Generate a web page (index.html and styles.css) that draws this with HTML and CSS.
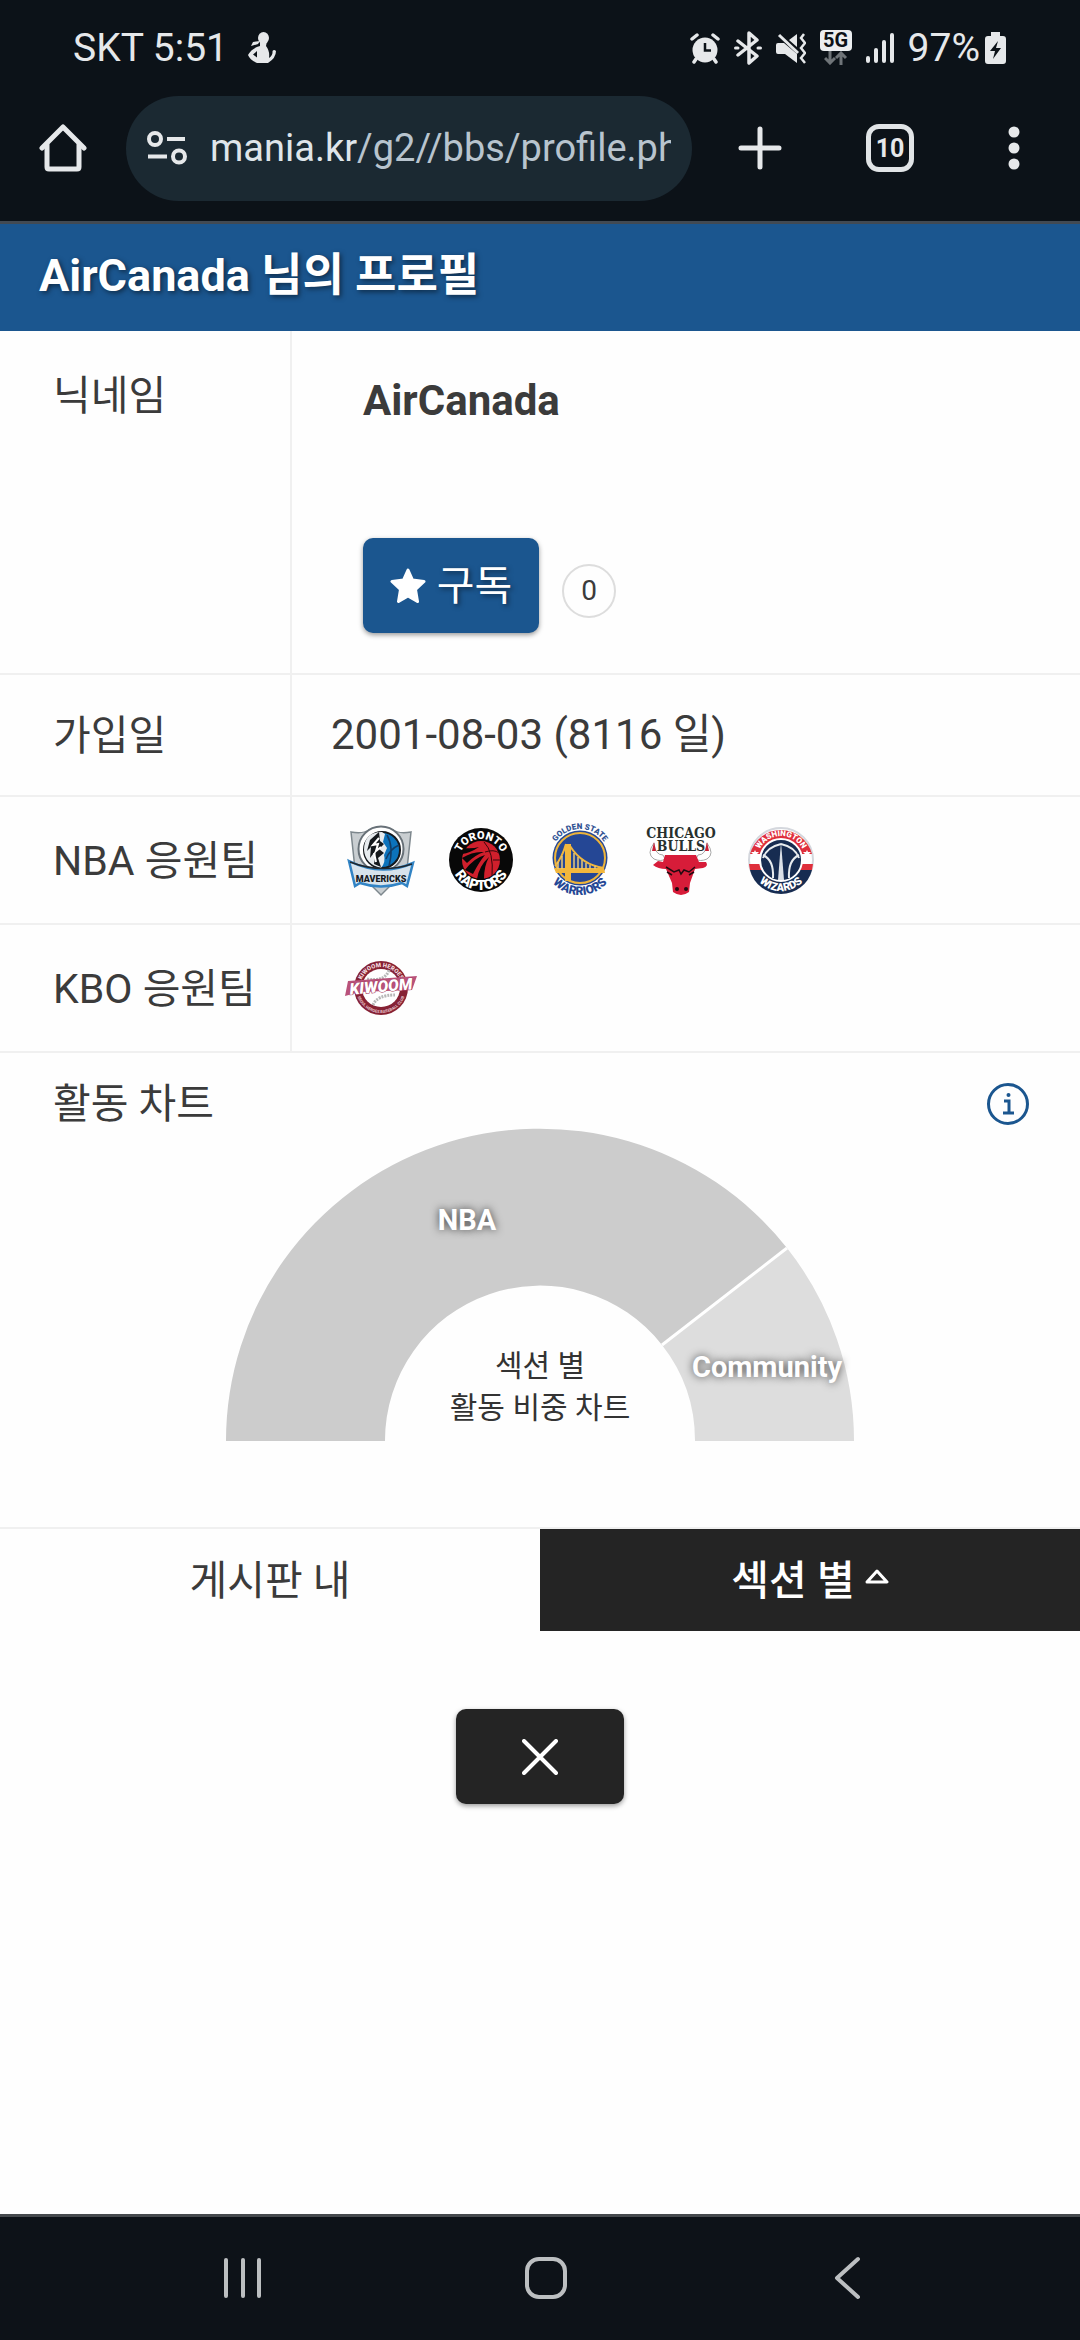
FILE: index.html
```html
<!DOCTYPE html>
<html lang="ko">
<head>
<meta charset="utf-8">
<meta name="viewport" content="width=device-width, initial-scale=1">
<title>AirCanada 님의 프로필</title>
<link rel="stylesheet" href="styles.css">
</head>
<body>
<div class="screen">
  <header class="system-top">
    <div class="status-bar">
      <div class="status-left">
        <span>SKT 5:51</span>
        <svg width="28" height="32" viewBox="0 0 28 32" fill="currentColor" aria-hidden="true">
          <ellipse cx="15.500" cy="6" rx="5.500" ry="6"/>
          <path d="M12 9 L5 10 L3 14 L10 12 Z"/>
          <path d="M12 9 H19 L18 14 Q22 19 21 26 Q25 23 24.500 19 Q26 17 28 19 Q28 26 20 31 H9 Q2 28 0 23 Q4 16 12 14 Z"/>
          <path d="M5 22.500 L9 19 L9 25.500 Z" fill="#0c1218"/>
        </svg>
      </div>
      <div class="status-right">
        <svg width="30" height="32" viewBox="0 0 30 32" aria-hidden="true">
          <circle cx="15" cy="18" r="12.500" fill="currentColor"/>
          <path d="M2 7 L7 3 M28 7 L23 3 M6 27 L4 30 M24 27 L26 30" stroke="currentColor" stroke-width="3.500" stroke-linecap="round"/>
          <path d="M15 11 V18.500 H21" fill="none" stroke="#0c1218" stroke-width="2.500"/>
        </svg>
        <svg width="28" height="34" viewBox="0 0 28 34" fill="none" stroke="currentColor" stroke-width="3.500" stroke-linejoin="round" stroke-linecap="round" aria-hidden="true">
          <path d="M4 10 L23 25 L15 32 V2 L23 9 L4 24"/>
          <path d="M1.500 17 H4 M24 17 H26.500" stroke-width="3"/>
        </svg>
        <svg width="30" height="32" viewBox="0 0 30 32" aria-hidden="true">
          <path d="M0 13 Q0 11 2 11 H8 L21 22 V31 L9 22 H2 Q0 22 0 20 Z M13 8 L21 2 V15 Z" fill="currentColor"/>
          <path d="M3 3 L22 21" stroke="currentColor" stroke-width="3"/>
          <path d="M28 2 L25 6 L29 11 L25 16 L29 21 L25 26 L29 31" fill="none" stroke="currentColor" stroke-width="2.500"/>
        </svg>
        <span class="network">
          <span class="network-badge">5G</span>
          <svg width="24" height="14" viewBox="0 0 24 14" fill="none" stroke="#6f7478" stroke-width="3" aria-hidden="true">
            <path d="M6 0 V12 M1 7 L6 12 L11 7 M17 14 V2 M12 7 L17 2 L22 7"/>
          </svg>
        </span>
        <svg width="28" height="32" viewBox="0 0 28 32" stroke="currentColor" stroke-width="4" stroke-linecap="round" aria-hidden="true">
          <path d="M2 26 V29 M10 18 V29 M18 10 V29 M26 3 V29"/>
        </svg>
        <span class="battery">97%
          <svg width="21" height="34" viewBox="0 0 21 34" aria-hidden="true">
            <path d="M6 1 H15 V5 H18 Q21 5 21 8 V30 Q21 33 18 33 H3 Q0 33 0 30 V8 Q0 5 3 5 H6 Z" fill="currentColor"/>
            <path d="M13 10 L5 20 H10 L8 28 L16 17 H11 Z" fill="#0c1218"/>
          </svg>
        </span>
      </div>
    </div>
    <nav class="browser-bar" aria-label="브라우저">
      <button class="icon-button" type="button" aria-label="홈">
        <svg width="48" height="48" viewBox="0 0 48 48" fill="none" stroke="currentColor" stroke-width="5" stroke-linejoin="round" stroke-linecap="round" aria-hidden="true">
          <path d="M3 24 L24 3 L45 24"/><path d="M8 21 V43 Q8 45 10 45 H38 Q40 45 40 43 V21"/>
        </svg>
      </button>
      <div class="address">
        <svg width="40" height="34" viewBox="0 0 40 34" fill="none" stroke="currentColor" stroke-width="4" aria-hidden="true">
          <circle cx="8" cy="8" r="6"/><path d="M20 8 H38 M1 25.500 H20"/><circle cx="32" cy="25.500" r="6"/>
        </svg>
        <a class="address-text" href="#"><span class="address-host">mania.kr</span>/g2//bbs/profile.ph</a>
      </div>
      <div class="browser-actions">
        <button class="icon-button" type="button" aria-label="새 탭">
          <svg width="44" height="44" viewBox="0 0 44 44" stroke="currentColor" stroke-width="5" stroke-linecap="round" aria-hidden="true"><path d="M22 3 V41 M3 22 H41"/></svg>
        </button>
        <button class="icon-button tab-count" type="button" aria-label="탭 10개">10</button>
        <button class="icon-button menu" type="button" aria-label="메뉴">
          <svg width="12" height="44" viewBox="0 0 12 44" fill="currentColor" aria-hidden="true"><circle cx="6" cy="6" r="5.500"/><circle cx="6" cy="22" r="5.500"/><circle cx="6" cy="38" r="5.500"/></svg>
        </button>
      </div>
    </nav>
  </header>

  <main class="page">
    <h1 class="page-title">AirCanada 님의 프로필</h1>
    <table class="profile">
      <tr class="row-name">
        <th scope="row">닉네임</th>
        <td>
          <div class="member">
            <strong class="member-name">AirCanada</strong>
            <div class="subscribe">
              <button class="button button-primary" type="button">
                <svg width="36" height="36" viewBox="0 0 36 36" fill="currentColor" stroke="currentColor" stroke-width="3" stroke-linejoin="round" aria-hidden="true"><path d="M18 2 L22.500 12 L34 13.500 L25.500 21.500 L27.500 33.500 L18 28 L8.500 33.500 L10.500 21.500 L2 13.500 L13.500 12 Z"/></svg>
                구독
              </button>
              <span class="count">0</span>
            </div>
          </div>
        </td>
      </tr>
      <tr class="row-date">
        <th scope="row">가입일</th>
        <td>2001-08-03 (8116 일)</td>
      </tr>
      <tr class="row-team">
        <th scope="row">NBA 응원팀</th>
        <td>
          <div class="teams">
            <svg class="team" viewBox="0 0 72 72" role="img" aria-label="Dallas Mavericks">
              <path d="M6 8 Q18 10 24 6 H48 Q54 10 66 8 L62 45 L36 71 L10 45 Z" fill="#c9ced1" stroke="#7d878d" stroke-width="1.500"/>
              <circle cx="36" cy="25" r="22.500" fill="#fff" stroke="#687178" stroke-width="2"/>
              <circle cx="37" cy="26" r="18" fill="#0c73bc" stroke="#15191d" stroke-width="2"/>
              <path d="M37 8 Q19 8 19 26 Q20 40 36 44 Q41 38 39 31 L42 24 L38 18 L40 10 Z" fill="#e7ebee"/>
              <path d="M34 8 L25 16 L22 27 L26 23 L25 34 L31 26 L29 40 L36 43 L33 34 L39 29 L34 25 L39 20 L35 17 Z" fill="#15191d"/>
              <path d="M34 14 L28 21 L33 20 L31 27 L36 23 M29 29 L31 38" fill="none" stroke="#fff" stroke-width="2"/>
              <path d="M42 11 Q49 23 44 42 M54 21 Q45 25 41 35" fill="none" stroke="#123d68" stroke-width="1.500"/>
              <path d="M4 37 Q36 53 68 39 L62 62 L57 59 Q36 66 15 59 L10 62 Z" fill="#d7e3ec" stroke="#3183c4" stroke-width="2.500"/>
              <path d="M5 38 Q36 50 67 40" fill="none" stroke="#20272d" stroke-width="1.500"/>
              <text x="36" y="58" text-anchor="middle" font-size="9" class="logo-text" fill="#161a1e">MAVERICKS</text>
            </svg>
            <svg class="team" viewBox="0 0 72 72" role="img" aria-label="Toronto Raptors">
              <defs><path id="raptors-top" d="M14 37 A22 22 0 0 1 58 37"/><path id="raptors-bottom" d="M6 36 A30 30 0 0 0 66 36"/></defs>
              <circle cx="36" cy="36" r="32" fill="#080808"/>
              <circle cx="36" cy="36" r="19" fill="#d01f2c"/>
              <path d="M17 34 Q28 27 39 28 Q30 31 22 39 Z M20 46 Q29 34 40 31 Q34 38 28 50 Z M32 55 Q34 42 44 33 Q39 42 39 55 Z M18 24 Q28 25 34 23 Q25 29 17 30 Z" fill="#080808"/>
              <path d="M39 18 Q49 28 47 52 M40 28 Q49 25 54 29 M48 36 H55" fill="none" stroke="#38070b" stroke-width="1"/>
              <text class="logo-text" font-size="11" fill="#fff" text-anchor="middle"><textPath href="#raptors-top" startOffset="50%">TORONTO</textPath></text>
              <text class="logo-text" font-size="14" fill="#fff" text-anchor="middle"><textPath href="#raptors-bottom" startOffset="50%">RAPTORS</textPath></text>
            </svg>
            <svg class="team" viewBox="0 0 72 72" role="img" aria-label="Golden State Warriors">
              <defs><path id="warriors-top" d="M6 34 A29 29 0 0 1 64 34"/><path id="warriors-bottom" d="M-2 34 A37 37 0 0 0 72 34"/></defs>
              <g transform="translate(0 -2)">
                <circle cx="35" cy="36" r="27.500" fill="#254795"/>
                <circle cx="35" cy="36" r="25" fill="#254795" stroke="#eeb43a" stroke-width="2"/>
                <path d="M20 22 H26 V59 H20 Z M9 46 H59 L60 51 H11 Z" fill="#f2b73d"/>
                <path d="M21 22 Q17 36 10 44 M25 24 Q37 43 59 46" fill="none" stroke="#f2b73d" stroke-width="2"/>
                <path d="M13 40 V47 M17 34 V47 M29 31 V47 M33 35 V47 M37 38 V47 M41 41 V47 M45 43 V47 M50 44 V47" stroke="#e9c778" stroke-width="1.500"/>
              </g>
              <text class="logo-text" font-size="8" fill="#315293" text-anchor="middle"><textPath href="#warriors-top" startOffset="50%">GOLDEN STATE</textPath></text>
              <text class="logo-text" font-size="12" fill="#254795" text-anchor="middle"><textPath href="#warriors-bottom" startOffset="50%">WARRIORS</textPath></text>
            </svg>
            <svg class="team" viewBox="0 0 72 72" role="img" aria-label="Chicago Bulls">
              <path d="M9 19 Q1 30 9 35 Q16 38 20 35 L18 31 Q10 31 9 19 Z M62 19 Q70 30 62 35 Q55 38 51 35 L53 31 Q61 31 62 19 Z" fill="#fff" stroke="#a8a8a8" stroke-width="1"/>
              <path d="M9 18 L7 27 H11 Z M62 18 L60 27 H64 Z" fill="#c81f34"/>
              <path d="M20 31 H51 L54 38 L61 38 Q64 42 58 44 L50 45 L45 59 L44 68 Q36 74 28 68 L27 59 L21 45 Q13 45 8 41 L13 37 L18 38 Z" fill="#d71c39"/>
              <path d="M21 43 L29 48 L34 46 L36 50 L39 46 L44 48 L50 43 M27 51 L22 48 M44 51 L49 48" fill="none" stroke="#210a10" stroke-width="1.500"/>
              <circle cx="32" cy="65" r="2" fill="#210a10"/><circle cx="41" cy="65" r="2" fill="#210a10"/>
              <text x="36" y="14" text-anchor="middle" font-size="14" class="logo-slab" fill="#27302e">CHICAGO</text>
              <text x="36" y="27" text-anchor="middle" font-size="14" class="logo-slab" fill="#27302e">BULLS</text>
            </svg>
            <svg class="team" viewBox="0 0 72 72" role="img" aria-label="Washington Wizards">
              <defs><path id="wizards-top" d="M12 36 A24 24 0 0 1 60 36"/><path id="wizards-bottom" d="M5 36 A31 31 0 0 0 67 36"/></defs>
              <circle cx="36" cy="36" r="32" fill="#fff" stroke="#d4d7dd" stroke-width="2"/>
              <path d="M5 30 A32 32 0 0 1 67 30 Z" fill="#df2f3c"/>
              <path d="M4 40 H68 L67 46 H5 Z" fill="#df2f3c"/>
              <path d="M5 46 H67 A32 32 0 0 1 5 46 Z" fill="#172c51"/>
              <circle cx="36" cy="36" r="21" fill="#172c51" stroke="#fff" stroke-width="2"/>
              <path d="M36 18 L33 56 H39 Z" fill="#dce1e8"/>
              <path d="M18 31 Q29 36 28 54 M54 31 Q43 36 44 54 M36 20 Q22 23 18 34 M36 20 Q50 23 54 34" fill="none" stroke="#e8ecef" stroke-width="2"/>
              <path d="M10 26 L11 28 L14 28 L12 30 L13 33 L10 31 L7 33 L8 30 L6 28 L9 28 Z M62 26 L63 28 L66 28 L64 30 L65 33 L62 31 L59 33 L60 30 L58 28 L61 28 Z" fill="#fff"/>
              <text class="logo-text" font-size="8" fill="#fff" text-anchor="middle"><textPath href="#wizards-top" startOffset="50%">WASHINGTON</textPath></text>
              <text class="logo-text" font-size="11" fill="#fff" text-anchor="middle"><textPath href="#wizards-bottom" startOffset="50%">WIZARDS</textPath></text>
            </svg>
          </div>
        </td>
      </tr>
      <tr class="row-team">
        <th scope="row">KBO 응원팀</th>
        <td>
          <div class="teams">
            <svg class="team" viewBox="0 0 72 72" role="img" aria-label="Kiwoom Heroes">
              <defs><path id="kiwoom-top" d="M15 36 A21 21 0 0 1 57 36"/><path id="kiwoom-bottom" d="M11 36 A25 25 0 0 0 61 36"/></defs>
              <circle cx="36" cy="36" r="27" fill="#862234"/>
              <circle cx="36" cy="36" r="19" fill="#fff"/>
              <path d="M22 27 Q40 30 44 18 M28 53 Q32 43 50 43" fill="none" stroke="#b8b8b8" stroke-width="3" stroke-dasharray="2 1"/>
              <text class="logo-text" font-size="6" fill="#f1d9dd" text-anchor="middle"><textPath href="#kiwoom-top" startOffset="50%">KIWOOM HEROES</textPath></text>
              <text class="logo-text" font-size="4" fill="#e0b9c0" text-anchor="middle"><textPath href="#kiwoom-bottom" startOffset="50%">SEOUL HEROES BASEBALL CLUB</textPath></text>
              <path d="M3 29 L72 24 L67 38 L15 40 L0 44 Z" fill="#b9527a"/>
              <text x="36" y="40" text-anchor="middle" font-size="16" class="logo-script" transform="rotate(-5 36 36)" fill="#fff" stroke="#a33c62" stroke-width="1" paint-order="stroke">KIWOOM</text>
            </svg>
          </div>
        </td>
      </tr>
    </table>

    <section class="activity">
      <div class="activity-head">
        <h2 class="activity-title">활동 차트</h2>
        <button class="icon-button info" type="button" aria-label="도움말">
          <svg width="44" height="44" viewBox="0 0 44 44" fill="none" stroke="currentColor" stroke-width="3" aria-hidden="true"><circle cx="22" cy="22" r="19.500"/><path d="M18 19 H23 V31 M17 31 H28"/><circle cx="22.500" cy="13" r="2" fill="currentColor" stroke="none"/></svg>
        </button>
      </div>
      <svg class="chart" viewBox="0 0 628 312" role="img" aria-label="섹션 별 활동 비중 차트">
        <path d="M0 312 A314 312 0 0 1 561 119 L436 216 A155 155 0 0 0 159 312 Z" fill="#ccc"/>
        <path d="M561 119 A314 312 0 0 1 628 312 H469 A155 155 0 0 0 436 216 Z" fill="#ddd"/>
        <path d="M561 119 L436 216" stroke="#fff" stroke-width="3"/>
        <text class="chart-label" x="241" y="101">NBA</text>
        <text class="chart-label" x="541" y="248">Community</text>
        <text class="chart-caption" x="314" y="247">섹션 별</text>
        <text class="chart-caption" x="314" y="289">활동 비중 차트</text>
      </svg>
    </section>

    <div class="tabs">
      <button class="tab" type="button">게시판 내</button>
      <button class="tab tab-active" type="button">섹션 별
        <svg width="24" height="16" viewBox="0 0 24 16" fill="none" stroke="currentColor" stroke-width="3" stroke-linejoin="round" aria-hidden="true"><path d="M12 2 L22 13 H2 Z"/></svg>
      </button>
    </div>
    <div class="close-row">
      <button class="button button-dark" type="button" aria-label="닫기">
        <svg width="36" height="36" viewBox="0 0 36 36" stroke="currentColor" stroke-width="4" stroke-linecap="round" aria-hidden="true"><path d="M2 2 L34 34 M34 2 L2 34"/></svg>
      </button>
    </div>
  </main>

  <nav class="system-nav" aria-label="시스템">
    <button class="icon-button" type="button" aria-label="최근 앱">
      <svg width="44" height="44" viewBox="0 0 44 44" stroke="currentColor" stroke-width="4" stroke-linecap="round" aria-hidden="true"><path d="M5 4 V40 M22 4 V40 M38 4 V40"/></svg>
    </button>
    <button class="icon-button" type="button" aria-label="홈 화면">
      <svg width="44" height="44" viewBox="0 0 44 44" fill="none" stroke="currentColor" stroke-width="4" aria-hidden="true"><rect x="3" y="3" width="38" height="38" rx="12"/></svg>
    </button>
    <button class="icon-button" type="button" aria-label="뒤로">
      <svg width="44" height="44" viewBox="0 0 44 44" fill="none" stroke="currentColor" stroke-width="4" stroke-linecap="round" stroke-linejoin="round" aria-hidden="true"><path d="M32 3 L11 22 L32 41"/></svg>
    </button>
  </nav>
</div>
</body>
</html>
```
FILE: styles.css
```css
* { box-sizing: border-box; }

body {
  margin: 0;
  font-family: Roboto, "Noto Sans CJK KR", sans-serif;
  font-size: 42px;
  color: #3b3b3b;
  background: #fefefe;
}

button {
  margin: 0;
  padding: 0;
  border: 0;
  font: inherit;
  color: inherit;
  background: none;
}

svg { display: block; flex: none; }

.screen {
  display: flex;
  flex-direction: column;
  min-height: 100vh;
}

/* Status bar and browser toolbar */
.system-top {
  color: #e6e8ea;
  background: #0c1218;
  border-bottom: 3px solid #424a53;
}

.status-bar {
  display: flex;
  justify-content: space-between;
  align-items: center;
  height: 95px;
  padding: 0 74px 0 73px;
  font-size: 39px;
  line-height: 48px;
}

.status-left { display: flex; align-items: center; gap: 20px; }
.status-right { display: flex; align-items: center; gap: 14px; }
.battery { display: flex; align-items: center; gap: 5px; }

.network {
  display: flex;
  flex-direction: column;
  align-items: center;
}

.network-badge {
  width: 32px;
  border-radius: 4px;
  font-size: 20px;
  line-height: 21px;
  font-weight: 700;
  text-align: center;
  color: #0c1218;
  background: #eceef0;
}

.browser-bar {
  display: flex;
  align-items: center;
  height: 126px;
  padding: 0 56px 20px 39px;
}

.icon-button {
  display: flex;
  align-items: center;
  justify-content: center;
}

.address {
  display: flex;
  align-items: center;
  flex: 1;
  gap: 23px;
  min-width: 0;
  height: 105px;
  margin-left: 39px;
  padding: 0 21px;
  border-radius: 53px;
  background: #1b2932;
}

.address-text {
  flex: 1;
  min-width: 0;
  overflow: hidden;
  white-space: nowrap;
  font-size: 38px;
  line-height: 52px;
  text-decoration: none;
  color: #b8c4ce;
}

.address-host { color: #dfe5ea; }

.browser-actions {
  display: grid;
  grid-template-columns: 44px 48px 12px;
  align-items: center;
  column-gap: 84px;
  width: 332px;
  padding-left: 46px;
}

.menu { justify-self: end; }
.browser-actions .menu { margin-right: -10px; }

.tab-count {
  width: 48px;
  height: 48px;
  border: 5px solid #e1e4e6;
  border-radius: 13px;
  font-size: 25px;
  font-weight: 700;
}

/* Profile page */
.page { flex: 1; }

.page-title {
  margin: 0;
  padding: 0 39px 3px;
  font-size: 45px;
  line-height: 104px;
  font-weight: 700;
  color: #fff;
  background: #1b568f;
  text-shadow: 2px 2px 5px rgba(0, 0, 0, 0.5);
}

.profile {
  width: 100%;
  border-collapse: collapse;
  line-height: 60px;
}

.profile tr { border-bottom: 2px solid #f0f0f0; }

.profile th {
  width: 291px;
  padding: 2px 0 0 53px;
  border-right: 2px solid #f0f0f0;
  font-size: 41px;
  font-weight: 400;
  text-align: left;
  white-space: nowrap;
}

.profile td { padding: 0 39px; }
.profile .row-name th { padding-top: 35px; vertical-align: top; }
.row-name { height: 343px; }
.row-name td { vertical-align: top; }
.row-date { height: 122px; }
.row-team { height: 128px; }

.member { padding: 40px 32px 0; }
.member-name { display: block; font-weight: 700; }

.subscribe {
  display: flex;
  align-items: center;
  gap: 23px;
  margin-top: 107px;
}

.button {
  display: flex;
  align-items: center;
  justify-content: center;
  height: 95px;
  border-radius: 10px;
  color: #fff;
  box-shadow: 0 2px 5px rgba(0, 0, 0, 0.4);
}

.button-primary {
  gap: 11px;
  width: 176px;
  font-size: 41px;
  background: #1b568f;
  text-shadow: 2px 2px 5px rgba(0, 0, 0, 0.5);
}

.button-dark { width: 168px; background: #242424; }

.count {
  width: 54px;
  height: 54px;
  margin-top: 10px;
  border: 2px solid #ddd;
  border-radius: 50%;
  font-size: 28px;
  line-height: 50px;
  text-align: center;
}

.teams { display: flex; gap: 28px; padding-left: 14px; }
.team { width: 72px; height: 72px; overflow: visible; }
.logo-text { font-family: Roboto, sans-serif; font-weight: 900; }
.logo-slab { font-family: "DejaVu Serif Condensed", "Liberation Serif", serif; font-weight: 700; }
.logo-script { font-family: Roboto, sans-serif; font-style: italic; font-weight: 900; }

/* Activity chart */
.activity { padding-bottom: 86px; }

.activity-head {
  display: flex;
  align-items: center;
  justify-content: space-between;
  height: 76px;
  padding: 26px 50px 0 53px;
}

.activity-title { margin: 0; font-size: 41px; line-height: 60px; font-weight: 400; }
.info { color: #1b568f; }

.chart {
  width: 100%;
  max-width: 628px;
  margin: 0 auto;
  overflow: visible;
}

.chart-label {
  font-size: 29px;
  font-weight: 700;
  text-anchor: middle;
  fill: #fff;
  text-shadow: 0 0 9px rgba(0, 0, 0, 0.7);
}

.chart-caption { font-size: 30px; text-anchor: middle; fill: #333; }

/* Tabs and close button */
.tabs { display: flex; border-top: 2px solid #f0f0f0; }

.tab {
  display: flex;
  flex: 1;
  align-items: center;
  justify-content: center;
  gap: 10px;
  height: 102px;
  padding-bottom: 7px;
  font-size: 41px;
}

.tab-active {
  font-weight: 500;
  color: #fff;
  background: #242424;
}

.close-row {
  display: flex;
  justify-content: center;
  padding: 78px 0;
}

/* System navigation */
.system-nav {
  display: flex;
  align-items: center;
  justify-content: space-between;
  height: 126px;
  padding: 0 210px 2px 221px;
  border-top: 3px solid #45494d;
  color: #bcbfc1;
  background: #0d1218;
}
```
